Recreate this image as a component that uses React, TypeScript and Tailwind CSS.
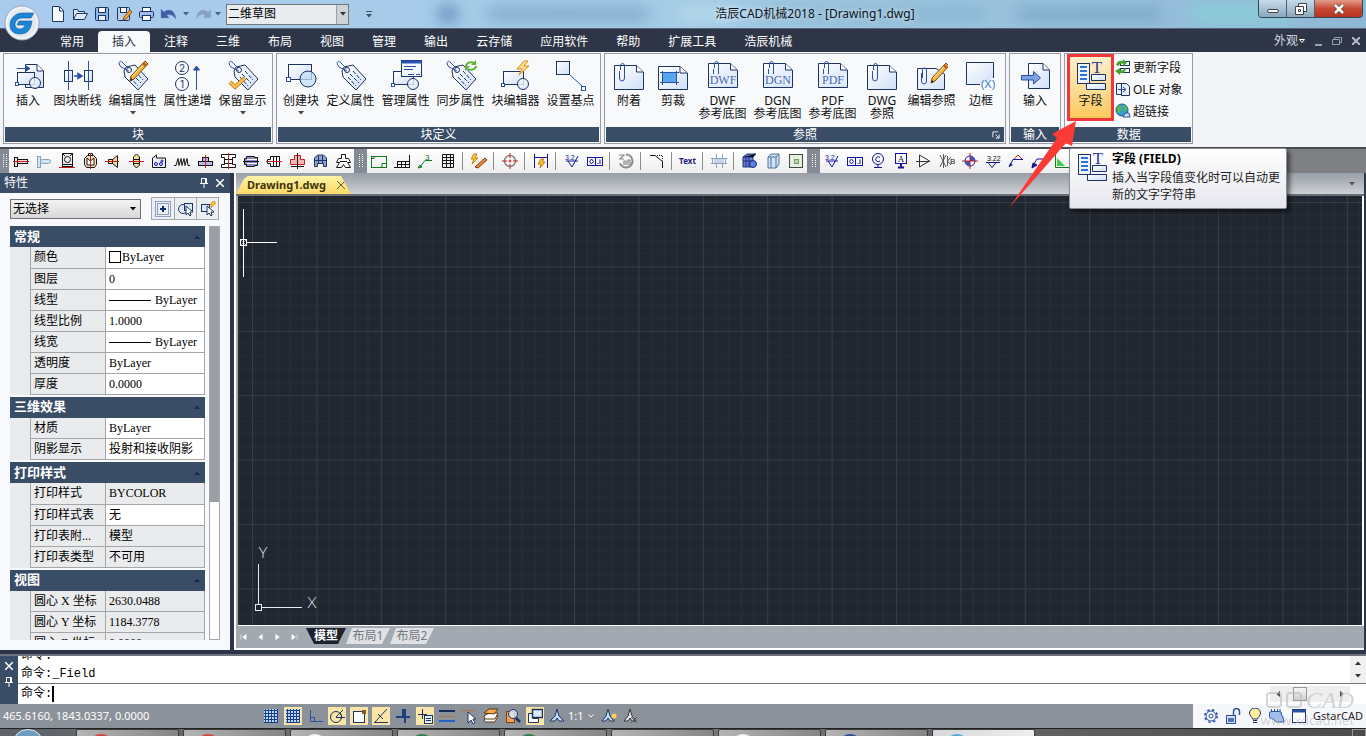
import React, { useState } from 'react';

const NAVY = '#1d3461';
const BLUE = '#2c4fa3';

const tagShape = (
  <g fill="none" stroke={NAVY}>
    <path d="M7 12L9 8L18 6L31 20L21 31L8 18Z" fill="url(#paper)" />
    <circle cx="12" cy="11" r="2.5" fill="#fff" />
    <path d="M12 12L4 8C1 5 2 1 5 3L11 9" stroke={BLUE} />
    <path d="M18 12l8 9M15 15l9 9M13 18l8 9" strokeDasharray="4 1.5" />
  </g>
);

const pencil = (
  <g>
    <path d="M28 2l3 3L17 20l-4 2l1-5z" fill="#f5b942" stroke="#7a4a12" />
    <path d="M27 3l3 3l-2 2l-3-3z" fill="#b5651d" />
    <path d="M15 17L26 6" stroke="#ffe39a" />
    <path d="M13 22l1-3l2 2z" fill="#222" />
  </g>
);

const clipPage = (
  <g fill="none" stroke={NAVY}>
    <path d="M1.500 8.500H23.500L30.500 15V32.500H1.500Z" fill="url(#paper)" transform="translate(0 -2)" />
    <path d="M23.500 6.500V13H30" fill="#fff" />
    <path d="M6.500 12V19a2.500 3 0 0 0 5 0V7a2 2.500 0 0 0-4 0V11" stroke={BLUE} />
  </g>
);

const namedPage = (text: string) => (
  <g>
    <g transform="translate(0 -2)">{clipPage}</g>
    <rect x="2" y="15" width="28" height="11" fill="#e4eefc" />
    <text x="16" y="25" textAnchor="middle" fontFamily="Liberation Serif" fontSize="12" fill="#4a6bb5">{text}</text>
  </g>
);

const blockShape = (
  <g stroke={NAVY} fill="url(#paper)">
    <rect x="3.500" y="12.500" width="20" height="13" />
    <circle cx="23" cy="25" r="5.500" fillOpacity=".8" />
    <rect x="1.500" y="24.500" width="3" height="3" fill="#fff" stroke={BLUE} />
  </g>
);

const fieldShape = (
  <g>
    <rect x="2.500" y="4.500" width="12" height="20" fill="#eef5ff" stroke={NAVY} />
    <path d="M5 8h7M5 12h7M5 16h7M5 20h7" stroke="#2f74d0" strokeWidth="2" />
    <text x="22" y="14" textAnchor="middle" fontFamily="Liberation Serif" fontSize="17" fill="#2a3da0">T</text>
    <path d="M16.500 21.500v-6h14v6z" fill="url(#paper)" stroke={NAVY} />
    <path d="M11.500 24.500h19v6h-19z" fill="url(#paper)" stroke={NAVY} />
  </g>
);

// ribbon drawings, 32 x 32
const bigIcons: Record<string, React.ReactNode> = {
  insert: (
    <g stroke={NAVY} fill="url(#paper)">
      <path d="M13.500 5.500H25L31.500 12V28.500H13.500Z" />
      <path d="M25 5.500V12H31" fill="#fff" />
      <rect x="5.500" y="13.500" width="17" height="12" />
      <circle cx="23" cy="24" r="5.500" fillOpacity=".8" />
      <rect x="3.500" y="23.500" width="3" height="3" fill="#fff" stroke={BLUE} />
      <path d="M5 9.500H16M14 7l4 2.500l-4 2.500z" fill={BLUE} stroke={BLUE} />
    </g>
  ),
  breakLine: (
    <g stroke={NAVY} fill="url(#paper)">
      <path d="M6.500 2V31M26.500 2V31" stroke={BLUE} />
      <rect x="2.500" y="11.500" width="8" height="11" />
      <rect x="22.500" y="11.500" width="8" height="11" />
      <path d="M6.500 11V23M26.500 11V23" stroke={BLUE} />
      <path d="M12 17H17M16 14.500l4 2.500l-4 2.500z" fill={BLUE} stroke={BLUE} strokeWidth="1.500" />
    </g>
  ),
  editAttr: <g>{tagShape}{pencil}</g>,
  attrUp: (
    <g fill="none" stroke={NAVY}>
      <circle cx="10" cy="9" r="6.500" />
      <circle cx="10" cy="25" r="6.500" />
      <text x="10" y="13" textAnchor="middle" fontFamily="Inter" fontSize="10" fill={NAVY} stroke="none">2</text>
      <text x="10" y="29" textAnchor="middle" fontFamily="Inter" fontSize="10" fill={NAVY} stroke="none">1</text>
      <path d="M24.500 31V9" stroke={BLUE} />
      <path d="M24.500 7l-3 4h6z" fill={BLUE} stroke={BLUE} />
    </g>
  ),
  keepAttr: <g>{tagShape}<path d="M3 23l5 5l10-9" fill="none" stroke="#b87414" strokeWidth="4" /><path d="M3 23l5 5l10-9" fill="none" stroke="#fbbd4e" strokeWidth="2.500" /></g>,
  createBlock: (
    <g stroke={NAVY} fill="url(#paper)">
      <rect x="3.500" y="5.500" width="23" height="15" />
      <circle cx="23" cy="20" r="8" fill="#c5dcf7" fillOpacity=".75" />
      <rect x="1.500" y="18.500" width="4" height="4" fill="#fff" stroke={BLUE} />
    </g>
  ),
  defineAttr: tagShape,
  manageAttr: (
    <g>
      {blockShape}
      <rect x="11.500" y="1.500" width="20" height="16" fill="#f4f9ff" stroke={NAVY} />
      <path d="M11 3h21" stroke="#2555b0" strokeWidth="3" />
      <path d="M14 7.500h12M14 10.500h9M18 15.500h6M26 15.500h4" stroke={BLUE} />
    </g>
  ),
  syncAttr: (
    <g>
      {tagShape}
      <g fill="none" stroke="#5bb531" strokeWidth="2">
        <path d="M21 7a5 4 0 0 1 8-3M31 7a5 4 0 0 1-8 3" />
        <path d="M31 1v5h-5zM20 12V7h5z" fill="#5bb531" stroke="none" />
      </g>
    </g>
  ),
  blockEditor: <g>{blockShape}<path d="M24 2L17 10h5l-3 6l10-9h-5l4-5z" fill="#ffdf8a" stroke="#d88916" /></g>,
  basePoint: (
    <g stroke={NAVY} fill="url(#paper)">
      <path d="M14 15L27 27" stroke={BLUE} />
      <rect x="1.500" y="2.500" width="13" height="13" />
      <rect x="26.500" y="27.500" width="4" height="4" fill="#fff" stroke={BLUE} />
    </g>
  ),
  attach: clipPage,
  clip: (
    <g stroke={NAVY} fill="url(#paper)">
      <path d="M1.500 7.500H23L30.500 14V30.500H1.500Z" />
      <path d="M23 7.500V14H30" fill="#fff" />
      <rect x="5.500" y="13.500" width="14" height="10" fill="#58a6ec" stroke={BLUE} />
      <path d="M5.500 12V26M19.500 12V26M3 13.500H22M3 23.500H22" stroke={BLUE} />
    </g>
  ),
  dwf: namedPage('DWF'),
  dgn: namedPage('DGN'),
  pdf: namedPage('PDF'),
  dwg: clipPage,
  editRef: (
    <g>
      <path d="M1.500 9.500H20L28.500 15V30.500H1.500Z" fill="url(#paper)" stroke={NAVY} />
      <path d="M5.500 14V22a2.500 3 0 0 0 5 0V11a2 2 0 0 0-4 0V19" fill="none" stroke={BLUE} />
      <g transform="translate(2 2)">{pencil}</g>
    </g>
  ),
  frame: (
    <g>
      <path d="M15 25.500H1.500V3.500H28.500V19" fill="url(#paper)" stroke={NAVY} />
      <text x="23" y="29" textAnchor="middle" fontFamily="Liberation Sans" fontSize="11" fill="#3277c8">(X)</text>
    </g>
  ),
  import: (
    <g>
      <path d="M9.500 4.500H24L30.500 11V29.500H9.500Z" fill="url(#paper)" stroke={NAVY} />
      <path d="M24 4.500V11H30" fill="#fff" stroke={NAVY} />
      <path d="M2.500 16.500h12v-4l7 6.500l-7 6v-4h-12z" fill="#7fa3e2" stroke={BLUE} />
    </g>
  ),
  field: fieldShape,
};

const red = '#c81e1e';
const ink = '#151515';
const dblue = '#1414a0';

const roughness = <g fill="none" stroke={dblue}><path d="M2 8h12M4 8l4 6l6-11" /><text x="1" y="7" fontSize="7" fontFamily="Liberation Sans" fill={dblue} stroke="none">3.2</text></g>;
const tolerance = <g fill="none" stroke={dblue}><rect x=".5" y="4.500" width="15" height="8" /><path d="M8.500 4v9M4.500 6l2 2.500l-2 2.500l-2-2.500zM13 6.500v4.500M10.500 10.500h1" /></g>;

// toolbar drawings, 16 x 16
const icons: Record<string, React.ReactNode> = {
  bolt: <g fill="#f7dada" stroke={ink}><rect x="1.500" y="4.500" width="3" height="9" /><rect x="4.500" y="6.500" width="10" height="4" /><path d="M0 8.500h16" stroke={red} /></g>,
  pin: <g fill="#cfe6f7" stroke="#8aa2b8"><rect x="1.500" y="3.500" width="3" height="11" /><rect x="4.500" y="6.500" width="10" height="4" rx="2" /></g>,
  bearing: <g fill="none" stroke={ink}><rect x="3.500" y=".5" width="10" height="13" fill="#eee" /><circle cx="8.500" cy="6.500" r="3" /><path d="M4 1l2 2M13 1l-2 2M4 11.500h9" /><path d="M0 14.500h16" stroke={red} /></g>,
  seal: <g fill="#f2e3b8" stroke={ink}><path d="M2.500 5.500l3-3h6l3 3v6l-2 3h-8l-2-3z" /><path d="M5 5l3.500 3l3.500-3v7H5z" fill="#fff" /><path d="M6.500 2V.5h4V2" /><path d="M8.500 0v16" stroke={red} /></g>,
  cone: <g fill="#f2d8a8" stroke={ink}><path d="M3.500 6.500h4l5-4v12l-5-4h-4z" /><path d="M7.500 6v5" /><path d="M0 8.500h14" stroke={red} /></g>,
  spindle: <g fill="#f2e08c" stroke={ink}><path d="M5.500 4l3-3l3 3v8l-3 3l-3-3z" /><path d="M1 8.500h15" stroke={red} /><path d="M5 6.500h7M5 10.500h7" /></g>,
  holePlate: <g fill="#e8ecfa" stroke={ink}><path d="M1.500 14.500V5l4-3v3h9v9.500z" /><g stroke={dblue} fill="none"><circle cx="5" cy="11" r="1.500" /><circle cx="10" cy="11" r="1.500" /><circle cx="11" cy="8" r="1" /></g></g>,
  spring: <path d="M0 12.500h2l2-7l1 7l2-7l1 7l2-7l1 7l2-7l1 7h2" fill="none" stroke={ink} />,
  gear1: <g fill="#b9b9e8" stroke={ink}><rect x="5.500" y="4.500" width="6" height="4" /><rect x="1.500" y="8.500" width="14" height="4" /><path d="M8.500 2v13" stroke={red} /></g>,
  beam: <g fill="#fff" stroke={ink}><path d="M1.500 1.500h14v3h-3v7h3v3h-14v-3h3v-7h-3z" /><path d="M5 6.500h7M5 10.500h7" /><path d="M8.500 0v16" stroke={red} /></g>,
  coupling: <g fill="#8c8ccf" stroke={ink}><path d="M3.500 3.500h8v1h3v8h-3v1h-8v-2h-2v-6h2z" /><path d="M4 6.500h10M4 10.500h10" stroke="#fff" /><path d="M0 8.500h16" /></g>,
  rotor: <g fill="#fff" stroke={ink}><path d="M1.500 6.500h3v-3h9v10h-9v-3h-3z" /><path d="M7.500 4v9M10.500 4v9" /><path d="M0 8.500h16" stroke={red} /></g>,
  pump: <g fill="#f4b6b6" stroke={red}><path d="M5.500 2.500h6v4h4v5h-14v-5h4z" /><path d="M8.500 0v16M2 13.500h13" stroke={ink} /></g>,
  rack: <g fill="#8ea3cf" stroke={NAVY}><path d="M2.500 13.500V5l3-3h6l3 3v8.500h-3v-3h-6v3zM2 7.500h13M6.500 3v7M10.500 3v7" /></g>,
  robot: <g fill="#fff" stroke={ink}><path d="M6.500 1.500h4v4h3l2 4h-3l3 5h-5l-2-3l-2 3h-5l3-5h-3l2-4h3z" /><path d="M5 8.500h7" /></g>,
  frameGreen: <g fill="none" stroke="#0e7a1c"><rect x=".5" y="3.500" width="15" height="11" /><path d="M3 3.500v2H1M15 10.500h-4v4" /></g>,
  bench: <path d="M15.500 2v13M3.500 8v7M3 8.500h13M3 11.500h13M7.500 8v7M11.500 8v7M0 14.500h16" stroke={ink} fill="none" />,
  leader: <g fill="none" stroke="#0e7a1c"><path d="M2 15l6-7.500h7" /><text x="8" y="7" fontSize="8" fontFamily="Liberation Sans" fill="#0e7a1c" stroke="none">3</text><path d="M1 15l4-1l-2-2z" /></g>,
  table: <path d="M2.500 1.500h11v13h-11zM2 4.500h12M2 7.500h12M2 10.500h12M6.500 1v14M10.500 1v14" stroke={ink} fill="#eee" />,
  torch: <g><path d="M3 1L0 6h3l-2 5l6-6H4l2-4z" fill="#ffcf4a" stroke="#c77d0b" /><path d="M14 5l2 2l-9 8l-3-1z" fill="#e98a3b" stroke="#8c3d10" /></g>,
  target: <g fill="none" stroke="#8a8a8a" strokeWidth="1.500"><circle cx="8" cy="8" r="5.500" /><path d="M8 0v5M8 11v5M0 8h5M11 8h5" stroke={red} strokeWidth="1" /><circle cx="8" cy="8" r="1" stroke={red} strokeWidth="1" /></g>,
  quickDim: <g fill="none" stroke={dblue}><path d="M1.500 1v14M14.500 1v14M2 4.500h12" /><path d="M8 6l-3 5h3l-1 4l5-6H9l2-3z" fill="#ffc837" stroke="#c77d0b" /></g>,
  roughness,
  tolerance,
  ring: <g fill="none" stroke="#8a8a8a" strokeWidth="2"><path d="M8 1.500a6.500 6.500 0 1 1-6 9" /><path d="M1 2h5L2 6h4M6 12V8h2v4M10 12V7h2v5" strokeWidth="1.200" /></g>,
  chamfer: <g fill="none" stroke={ink}><path d="M1 2.500h5l7.500 6v6.500" /><path d="M8 2.500h5.500v5" strokeDasharray="1 1" /></g>,
  grid: <g fill="none" stroke="#8aa0bb"><path d="M0 5.500h16M0 10.500h16M5.500 1v14M11.500 1v14" /><path d="M3 8h10" strokeWidth="4" stroke="#c6d3e4" /><path d="M1.500 5.500v5h13v-5z" /></g>,
  cube: <g stroke="#1c2f80"><path d="M1 4l4-3h9l-3 3v10H1z" fill="#6f7fd0" /><path d="M1 4h10l3-3M4 4v10M7 4v10M1 8h10" /><circle cx="11" cy="11" r="3.500" fill="#5d7fd9" /></g>,
  cube2: <g stroke="#50729e"><path d="M3 4l3-3h8v10l-3 4H3z" fill="#cfe3f5" /><path d="M3 4h8l3-3M11 4v11M6 4v11" fill="none" /></g>,
  viewport: <g stroke="#3d4d3d"><rect x="1.500" y="1.500" width="13" height="13" fill="#e6efe2" /><rect x="6.500" y="6.500" width="4" height="4" fill="#b9d2b4" stroke="#6f9c6a" /></g>,
  datum: <g fill="none" stroke={dblue}><circle cx="8" cy="6" r="5.500" /><path d="M10 4.500a2.500 2.500 0 1 0 0 3.500M8 12v3M4 14.500h8" /></g>,
  datumA: <g fill="none" stroke={dblue}><rect x="2.500" y=".5" width="11" height="10" /><text x="8" y="9" textAnchor="middle" fontSize="9" fontFamily="Liberation Serif" fill={ink} stroke="none">A</text><path d="M8 11v3M5 14.500h6" strokeWidth="2" /></g>,
  triangle: <g fill="none" stroke="#333"><path d="M3.500 2l10 6l-10 6zM0 8.500h14" /></g>,
  weld: <g fill="none" stroke="#555"><path d="M4.500 1v14M1 2l6 12M7 2L1 14M8.500 3v10M12 4L8.500 8l3.500 4" /><text x="11" y="11" fontSize="8" fontFamily="Liberation Sans" fill="#222" stroke="none">B</text></g>,
  center: <g><circle cx="8" cy="8" r="5" fill="#fff" stroke={dblue} /><path d="M8 3a5 5 0 0 1 5 5H8zM8 13a5 5 0 0 1-5-5h5z" fill="#3b57c8" /><path d="M8 0v16M0 8h16" stroke={red} /></g>,
  level: <g fill="none" stroke={dblue}><path d="M1 9.500h14M3 9.500l4 5l4-5" /><text x="2" y="8" fontSize="7" fontFamily="Liberation Sans" fill={ink} stroke="none">3.22</text></g>,
  arrowUp: <g fill="none"><path d="M1 14l4-7.500h10" stroke={dblue} /><path d="M1 14l4-2l-3-2z" fill={dblue} /><path d="M6 6l4-4l4 4" stroke={red} /></g>,
  arrowDown: <g fill="none" stroke={dblue}><path d="M1 14l5-8h9" /><path d="M1 15l5-3l-4-2z" fill={dblue} /></g>,
  angle: <g><path d="M1.500 1v13.500H15" stroke="#0e7a1c" fill="none" /><path d="M3 5l8 8H3z" fill="#3ecb4c" /></g>,
  // quick access
  newFile: <g fill="#f6f9ff" stroke={NAVY}><path d="M2.500.5h7l4 4v11h-11z" /><path d="M9.500 1v4h4" /></g>,
  open: <g fill="#dfeafa" stroke={NAVY}><path d="M1.500 13.500v-10h4l1 2h6v3" /><path d="M1.500 13.500l3-6h11l-3 6z" /></g>,
  save: <g fill="#8fb4e6" stroke={NAVY}><rect x="1.500" y="1.500" width="13" height="13" rx="1" /><rect x="4.500" y="1.500" width="7" height="5" fill="#fff" /><rect x="4.500" y="9.500" width="7" height="5" fill="#e8f0fb" /></g>,
  saveAs: <g fill="#b9cfee" stroke={NAVY}><rect x="1.500" y="1.500" width="12" height="13" rx="1" /><rect x="4.500" y="1.500" width="6" height="5" fill="#fff" /><path d="M14 4l2 2l-6 7l-3 1l1-3z" fill="#f5a93a" stroke="#8a5210" /></g>,
  print: <g fill="#9dbdea" stroke={NAVY}><rect x="4.500" y="1.500" width="8" height="5" fill="#fff" /><rect x="1.500" y="5.500" width="14" height="6" rx="1" /><rect x="4.500" y="9.500" width="8" height="5" fill="#fff" /></g>,
  undo: <path d="M1 3l3 3c5-4 11-2 12 7c-3-4-6-5-9-4l2 3H1z" fill="#3f5ca5" stroke="#6f89c0" strokeWidth=".5" />,
  redo: <path d="M15 3l-3 3c-5-4-11-2-12 7c3-4 6-5 9-4l-2 3h8z" fill="#86a0c9" stroke="#a5b8d4" strokeWidth=".5" />,
  // data panel
  refresh: <g><rect x="5.500" y="2.500" width="9" height="4" fill="#fff" stroke={NAVY} /><rect x="5.500" y="9.500" width="9" height="4" fill="#fff" stroke={NAVY} /><path d="M1 6c1-4 4-5 7-4V0l4 4l-4 3V5C6 4 4 5 4 7zM11 10c-1 4-4 5-6 4v2l-5-4l5-3v2c3 1 4 0 5-2z" fill="#43a52c" /></g>,
  ole: <g fill="#e8f1fd" stroke={NAVY}><path d="M1.500 2.500h8v11h-8z" /><path d="M6.500 2.500h5l3 3v9h-8z" /><path d="M3 8.500h7M8 6l3 2.500L8 11" fill="none" stroke={BLUE} /></g>,
  link: <g><circle cx="7" cy="7" r="6" fill="#3aa0c4" stroke="#1c5a87" /><path d="M3 3c3-1 4 1 3 3s1 3-2 4c-2-1-3-4-1-7zM9 2c3 1 4 4 3 6L9 6z" fill="#57b947" /><path d="M8 14l2-4h4l1 4z" fill="#cfdcf2" stroke={BLUE} /></g>,
  // palette buttons
  selAdd: <g stroke={BLUE} fill="none"><rect x=".5" y=".5" width="15" height="15" strokeDasharray="1 1" /><rect x="2.500" y="2.500" width="11" height="11" strokeDasharray="1 1" /><path d="M5 8h6M8 5v6" stroke="#102a70" strokeWidth="2" /></g>,
  selPick: <g stroke={NAVY} fill="#dbe8fa"><circle cx="5" cy="8" r="4.500" /><rect x="6.500" y="2.500" width="8" height="7" /><path d="M8 5v9l2-2l2 3l1-1l-1-3h3z" fill="#fff" /></g>,
  selQuick: <g stroke={NAVY} fill="#dbe8fa"><rect x="1.500" y="3.500" width="8" height="7" /><path d="M7 5v9l2-2l2 3l1-1l-1-3h3z" fill="#fff" /><path d="M13 0l-3 4h2l-1 3l5-5h-2l1-2z" fill="#ffc13b" stroke="#d68a15" strokeWidth=".7" /></g>,
  // status bar
  snap: <g stroke="#1a3d8f"><path d="M1 1h14v14H1z" fill="#b8daf7" stroke="none" /><path d="M2.500 1v14M5.500 1v14M8.500 1v14M11.500 1v14M14.500 1v14M1 2.500h14M1 5.500h14M1 8.500h14M1 11.500h14M1 14.500h14" /></g>,
  ortho: <g fill="none" stroke={BLUE}><path d="M3.500 2v11.500H16M3.500 9.500h4v4" /></g>,
  polar: <g fill="none" stroke={NAVY}><circle cx="7" cy="9" r="5.500" /><path d="M7 9.500h9M7 9l7-7M11 5a5 5 0 0 1 1 6" /></g>,
  osnap: <g><rect x="2.500" y="3.500" width="11" height="11" fill="#f8fbff" stroke={NAVY} /><rect x="11" y="2" width="4" height="4" fill="#8b5a1c" /></g>,
  otrack: <g fill="none" stroke={NAVY}><path d="M1 14.500h14M2 14L14 1M5 6l5 5" /></g>,
  dynUcs: <path d="M1 9h7V2h2v13M8 9h7" stroke="#1b3f80" strokeWidth="2" fill="none" />,
  dynInput: <g fill="#e8f3ff" stroke={NAVY}><path d="M1 6.500h9M5.500 1v10" /><rect x="7.500" y="7.500" width="8" height="8" /><path d="M9 10.500h5M9 12.500h5" /></g>,
  lweight: <g><path d="M0 3h16" stroke="#14295a" strokeWidth="2" /><path d="M0 8.500h16" stroke="#c06a2a" strokeDasharray="3 1" /><path d="M0 13h16" stroke="#2464c4" strokeWidth="2" /></g>,
  cursor: <g><path d="M0 2.500h16" stroke="#c06a2a" strokeDasharray="3 1" /><path d="M7 4v11l3-3l2 4l2-1l-2-4h3z" fill="#fff" stroke={NAVY} /></g>,
  layers: <g stroke="#5a3a10"><path d="M1 12l4-4h10l-3 6H2z" fill="#fff" /><path d="M1 8l5-3h9l-3 6H2z" fill="#fff" /><path d="M1 5l5-4h9l-4 5z" fill="#ffa94d" /></g>,
  zoomSel: <g><rect x="1.500" y="3.500" width="8" height="11" fill="#f0a24f" stroke="#8a3f10" /><circle cx="8" cy="6" r="4.500" fill="#d8ecff" fillOpacity=".8" stroke={NAVY} /><path d="M11 10l4 4" stroke={NAVY} strokeWidth="2.500" /></g>,
  model: <g fill="#d9ebff" stroke={NAVY}><path d="M1.500 5.500h4v5h6v4h-10z" fill="#fff" /><rect x="5.500" y="1.500" width="10" height="8" strokeWidth="1.500" /></g>,
  anno: <path d="M8 1l2 7l5 5h-5l-2-3l-2 3H1l5-5z" fill="#bcdcff" stroke={NAVY} />,
  annoLamp: <g><path d="M7 1l2 7l4 5H9l-2-3l-2 3H1l4-5z" fill="#bcdcff" stroke={NAVY} /><circle cx="13" cy="8" r="2.500" fill="#ffd257" /><path d="M13 11v3" stroke="#7c5a10" /></g>,
  annoOff: <g><path d="M7 1l2 7l4 5H9l-2-3l-2 3H1l4-5z" fill="#e9e9e9" stroke="#333" /><path d="M8 9l6 6M14 9l-6 6" stroke="#555" /></g>,
  gear: <g fill="none" stroke={BLUE}><circle cx="8" cy="8" r="5" strokeWidth="1" fill="#f3f7ff" /><circle cx="8" cy="8" r="6.200" strokeDasharray="2.500 2.400" strokeWidth="1.500" /><circle cx="8" cy="8" r="2" /></g>,
  unlock: <g fill="none" stroke={BLUE}><rect x="1.500" y="7.500" width="9" height="8" fill="#cfe0fa" /><path d="M8.500 7V3.500a3 3 0 0 1 6 0V7M4 10v4M6 10v4M8 10v4" strokeWidth="1.500" /></g>,
  bulb: <g><path d="M5.500 11c0-2-3-3-3-6a5.500 5 0 0 1 11 0c0 3-3 4-3 6z" fill="#fff0a0" stroke={NAVY} /><path d="M6 12.500h4M6 14.500h4" stroke={NAVY} /></g>,
  hardware: <g fill="#9fc0ee" stroke={BLUE}><rect x=".5" y="3.500" width="12" height="7" rx="2" /><path d="M2.500 1v3M5.500 1v3M8.500 1v3M11 1v3M3 10l4 4h8l-1-5l-2-3" /></g>,
  fullscreen: <g><rect x="1.500" y="1.500" width="13" height="13" fill="#fff" stroke={NAVY} /><path d="M1 3h14" stroke={BLUE} strokeWidth="3" /></g>,
  thumbtack: <path d="M5.500 3.500h5v5h-5zM9.500 3v6M4 8.500h8M8 9v4" fill="none" stroke="#fff" />,
};

const Icon: React.FC<{ name: string }> = ({ name }) => (
  <svg viewBox="0 0 16 16" className="h-4 w-4 shrink-0" aria-hidden="true">{icons[name]}</svg>
);

const BigIcon: React.FC<{ name: string }> = ({ name }) => (
  <svg viewBox="0 0 32 32" className="h-8 w-8 shrink-0" aria-hidden="true">{bigIcons[name]}</svg>
);

const Caret: React.FC<{ className?: string }> = ({ className = '' }) => (
  <svg viewBox="0 0 8 4" className={`h-1 w-2 shrink-0 ${className}`} fill="currentColor" aria-hidden="true">
    <path d="M1 0h6L4 3.500z" />
  </svg>
);

const menus = ['常用', '插入', '注释', '三维', '布局', '视图', '管理', '输出', '云存储', '应用软件', '帮助', '扩展工具', '浩辰机械'];

interface Tool {
  icon: string;
  lines: string[];
  wide?: boolean;
  menu?: boolean;
}

const blockTools: Tool[] = [
  { icon: 'insert', lines: ['插入'] },
  { icon: 'breakLine', lines: ['图块断线'], wide: true },
  { icon: 'editAttr', lines: ['编辑属性'], wide: true, menu: true },
  { icon: 'attrUp', lines: ['属性递增'], wide: true },
  { icon: 'keepAttr', lines: ['保留显示'], wide: true, menu: true },
];

const defTools: Tool[] = [
  { icon: 'createBlock', lines: ['创建块'], menu: true },
  { icon: 'defineAttr', lines: ['定义属性'], wide: true },
  { icon: 'manageAttr', lines: ['管理属性'], wide: true },
  { icon: 'syncAttr', lines: ['同步属性'], wide: true },
  { icon: 'blockEditor', lines: ['块编辑器'], wide: true },
  { icon: 'basePoint', lines: ['设置基点'], wide: true },
];

const refTools: Tool[] = [
  { icon: 'attach', lines: ['附着'] },
  { icon: 'clip', lines: ['剪裁'] },
  { icon: 'dwf', lines: ['DWF', '参考底图'], wide: true },
  { icon: 'dgn', lines: ['DGN', '参考底图'], wide: true },
  { icon: 'pdf', lines: ['PDF', '参考底图'], wide: true },
  { icon: 'dwg', lines: ['DWG', '参照'] },
  { icon: 'editRef', lines: ['编辑参照'], wide: true },
  { icon: 'frame', lines: ['边框'] },
];

const ToolButton: React.FC<{ tool: Tool }> = ({ tool }) => (
  <button className={`flex flex-col items-center pt-1 whitespace-nowrap leading-[13px] ${tool.wide ? 'w-[55px]' : 'w-11'}`}>
    <BigIcon name={tool.icon} />
    <span className="mt-[3px]">
      {tool.lines.map((line) => (
        <span key={line} className="block">{line}</span>
      ))}
    </span>
    {tool.menu && <Caret className="mt-1 text-[#444]" />}
  </button>
);

interface PanelProps {
  title: string;
  children: React.ReactNode;
  launcher?: boolean;
}

const Panel: React.FC<PanelProps> = ({ title, children, launcher }) => (
  <section className="flex h-[91px] flex-col border border-[#9a9ba5] bg-[#f8f9fb] p-px">
    <div className="flex flex-1 px-px">{children}</div>
    <h2 className="relative h-[15px] shrink-0 bg-[#3a4d66] text-center leading-[15px] text-white">
      {title}
      {launcher && (
        <button aria-label="参照设置" className="absolute top-1 right-1">
          <svg viewBox="0 0 9 9" className="h-2 w-2" fill="none" stroke="#fff"><path d="M1 7V1h6M4 4l4 4M8 4v4H4" /></svg>
        </button>
      )}
    </h2>
  </section>
);

const TitleBar = () => (
  <header className="relative flex h-7 items-center overflow-hidden bg-linear-to-r from-[#a9cbee] via-[#a5cce6] to-[#8fb8d6] pl-12">
    <div className="absolute inset-0 flex items-center gap-8 pl-[440px] blur-sm" aria-hidden="true">
      <span className="h-3 w-4 bg-[#4472a8]" />
      <span className="h-3 w-40 bg-[#7ba5c9]" />
      <span className="h-2 w-12 bg-[#c2e4ee]" />
      <span className="h-3 w-56 bg-[#84b3cf]" />
      <span className="h-2 w-36 bg-[#6b9ab9]" />
      <span className="h-4 w-24 bg-[#8ad0d8]" />
    </div>
    <nav className="relative flex items-center gap-[6px] pl-0.5">
      {['newFile', 'open', 'save', 'saveAs', 'print', 'undo'].map((name) => (
        <button key={name} aria-label={name}><Icon name={name} /></button>
      ))}
      <Caret className="text-[#49617f]" />
      <button aria-label="redo"><Icon name="redo" /></button>
      <Caret className="-ml-1 text-[#49617f]" />
    </nav>
    <div className="relative ml-1 flex h-[21px] w-[123px] items-center border border-[#6f7780] bg-[#e9ecef]">
      <select aria-label="工作空间" className="h-full w-full appearance-none bg-transparent pl-px outline-none">
        <option>二维草图</option>
      </select>
      <span className="pointer-events-none absolute inset-y-0 right-0 flex w-3 items-center justify-center border-l border-[#9aa0a6] bg-[#cfd3d7]">
        <Caret className="text-[#333]" />
      </span>
    </div>
    <span className="relative ml-4 flex flex-col items-center gap-0.5 text-[#3f5368]"><i className="h-px w-1.5 bg-current" /><Caret /></span>
    <h1 className="absolute inset-x-0 text-center text-[#0c1420] [text-shadow:0_0_6px_#fff]">
      <span className="pl-[264px]">浩辰CAD机械2018 - [Drawing1.dwg]</span>
    </h1>
    <div className="absolute top-0 right-[3px] flex h-[18px] overflow-hidden rounded-b border border-t-0 border-[#33475a]">
      <button aria-label="最小化" className="flex w-7 items-center justify-center border-r border-[#4b6075] bg-linear-to-b from-[#c7dceb] to-[#8aa7bd]">
        <i className="mt-1 h-1 w-3 rounded-xs border border-[#444] bg-white" />
      </button>
      <button aria-label="还原" className="flex w-7 items-center justify-center border-r border-[#4b6075] bg-linear-to-b from-[#c7dceb] to-[#8aa7bd]">
        <svg viewBox="0 0 12 12" className="h-3 w-3" fill="#fff" stroke="#444"><path d="M3.500.5h8v8h-8z" /><path d="M.5 3.500h8v8h-8z" /><path d="M3.500 6.500h2v2h-2z" /></svg>
      </button>
      <button aria-label="关闭" className="flex w-[47px] items-center justify-center bg-linear-to-b from-[#e39a8b] via-[#c64934] to-[#b8321c]">
        <svg viewBox="0 0 12 10" className="h-2.5 w-3"><path d="M2 1l8 8M10 1l-8 8" stroke="#543" strokeWidth="4" /><path d="M2 1l8 8M10 1l-8 8" stroke="#fff" strokeWidth="2.500" /></svg>
      </button>
    </div>
  </header>
);

const MenuBar = () => {
  const [active, setActive] = useState('插入');

  return (
    <div className="relative flex h-6 items-end border-t border-[#56617a] bg-[#2e3547] pl-[46px] text-white">
      <button aria-label="GstarCAD" className="absolute -top-6 left-1 z-10">
        <svg viewBox="0 0 36 36" className="h-9 w-9">
          <circle cx="18" cy="18" r="17" fill="#f1f4f8" stroke="#9aa7b8" />
          <circle cx="18" cy="18" r="14.500" fill="#e4e9f0" />
          <path d="M30 8H18C11 8 6 14 6 20c0 6 4 9 10 9c7 0 11-4 12-13H15l-2 4h8c-1 3-3 4-5 4c-3 0-5-2-5-4c0-4 3-7 7-7h9z" fill="#1d84d6" stroke="#1360a8" strokeWidth=".6" />
        </svg>
      </button>
      {menus.map((menu) => (
        <button
          key={menu}
          onClick={() => setActive(menu)}
          className={`h-[21px] rounded-t-sm px-3.5 whitespace-nowrap ${
            active === menu ? 'bg-[#f8f9fb] text-[#2e3547]' : 'text-white'
          }`}
        >
          {menu}
        </button>
      ))}
      <div className="ml-auto flex h-full items-center gap-2.5 pr-1.5 text-[#d5d9e2]">
        <button className="flex items-center gap-px">
          外观
          <svg viewBox="0 0 6 6" className="h-1.5 w-1.5" fill="none" stroke="#fff"><path d="M.5 1.500h5L3 4.500z" /></svg>
        </button>
        <button aria-label="最小化图形" className="mt-2 h-0.5 w-[7px] bg-[#99a0af]" />
        <button aria-label="还原图形">
          <svg viewBox="0 0 10 8" className="h-2 w-2.5" fill="none" stroke="#99a0af"><path d="M2.500 2V.5h7v5H8M.5 2.500h7v5h-7z" /></svg>
        </button>
        <button aria-label="关闭图形">
          <svg viewBox="0 0 8 8" className="h-2 w-2" stroke="#b5bac6" strokeWidth="2"><path d="M0 0l8 8M8 0L0 8" /></svg>
        </button>
      </div>
    </div>
  );
};

const FieldTooltip = () => (
  <>
    <svg viewBox="0 0 70 90" className="pointer-events-none absolute top-[67px] -left-[58px] z-20 h-[90px] w-[70px]" aria-hidden="true">
      <path d="M0 87L48 17L43 13L67 0L63 25L57 22Z" fill="#fb3a35" />
    </svg>
    <div role="tooltip" className="absolute top-[94px] left-0.5 z-30 flex w-[218px] gap-1 rounded-xs border border-[#8b8d94] bg-linear-to-b from-white to-[#e6e7ee] py-px pr-1 pl-1.5 leading-[17px] text-[#222] shadow-[3px_3px_4px_rgba(0,0,0,0.5)]">
      <BigIcon name="field" />
      <div className="pb-1">
        <strong className="block text-black">字段 (FIELD)</strong>
        <p className="pt-0.5">插入当字段值变化时可以自动更新的文字字符串</p>
      </div>
    </div>
  </>
);

const Ribbon = () => (
  <div className="flex h-[97px] shrink-0 gap-[3px] border-b-2 border-[#4a4c55] bg-[#f4f5f8] pt-px pl-[3px] leading-[13px] text-[#111]">
    <Panel title="块">
      {blockTools.map((tool) => <ToolButton key={tool.icon} tool={tool} />)}
    </Panel>
    <Panel title="块定义">
      {defTools.map((tool) => <ToolButton key={tool.icon} tool={tool} />)}
    </Panel>
    <Panel title="参照" launcher>
      {refTools.map((tool) => <ToolButton key={tool.icon} tool={tool} />)}
    </Panel>
    <Panel title="输入">
      <div className="px-px"><ToolButton tool={{ icon: 'import', lines: ['输入'] }} /></div>
    </Panel>
    <Panel title="数据">
      <div className="relative -mt-px h-[67px]">
        <button className="flex h-full w-[47px] flex-col items-center border-[3px] border-[#f0383c] bg-linear-to-b from-[#fdf0cc] via-[#fbdd98] to-[#fdc95a] pt-0.5">
          <BigIcon name="field" />
          <span className="mt-[3px]">字段</span>
        </button>
        <FieldTooltip />
      </div>
      <ul className="flex flex-col gap-1.5 py-1 pr-2 pl-px">
        {[['refresh', '更新字段'], ['ole', 'OLE 对象'], ['link', '超链接']].map(([icon, label]) => (
          <li key={icon}>
            <button className="flex items-center gap-0.5 whitespace-nowrap"><Icon name={icon} />{label}</button>
          </li>
        ))}
      </ul>
    </Panel>
  </div>
);

const toolRows: string[] = [
  'grip', 'bolt', 'pin', 'bearing', 'seal', 'cone', 'spindle', 'holePlate', 'spring', 'gear1', 'beam', 'coupling', 'rotor', 'pump', 'rack', 'robot',
  'grip', 'frameGreen', 'bench', 'leader', 'table', '|', 'torch', '|', 'target', '|', 'quickDim', '|', 'roughness', 'tolerance', '|', 'ring', '|',
  'chamfer', '|', 'Text', '|', 'grid', '|', 'cube', 'cube2', 'viewport',
  'grip', 'roughness', 'tolerance', 'datum', 'datumA', 'triangle', 'weld', 'center', 'level', 'arrowUp', 'arrowDown', 'angle',
];

const Toolbar = () => (
  <div className="flex h-6 shrink-0 bg-[#7f8083]">
    <div className="flex items-center bg-linear-to-b from-white to-[#eeeeee]">
      {toolRows.map((name, i) => {
        if (name === 'grip') {
          return (
            <span key={i} className={`flex h-full items-center justify-center bg-[#858b95] ${i === 0 ? 'w-[9px]' : 'w-[13px]'}`}>
              <svg viewBox="0 0 4 14" className="h-3.5 w-1" stroke="#fff" strokeDasharray="1 1"><path d="M.5 0v14M3.500 0v14" /></svg>
            </span>
          );
        }
        if (name === '|') {
          return <span key={i} className="mr-1 ml-[3px] h-[18px] w-px bg-[#8c8c8c]" />;
        }
        return (
          <button key={i} aria-label={name} className="flex w-[23px] justify-center">
            {name === 'Text' ? <b className="text-[8px] text-[#1a1a80]">Text</b> : <Icon name={name} />}
          </button>
        );
      })}
    </div>
  </div>
);

interface Prop {
  label: string;
  value: string;
  mark?: 'box' | 'line';
  locked?: boolean;
}

const groups: { title: string; rows: Prop[] }[] = [
  {
    title: '常规',
    rows: [
      { label: '颜色', value: 'ByLayer', mark: 'box' },
      { label: '图层', value: '0' },
      { label: '线型', value: 'ByLayer', mark: 'line' },
      { label: '线型比例', value: '1.0000' },
      { label: '线宽', value: 'ByLayer', mark: 'line' },
      { label: '透明度', value: 'ByLayer' },
      { label: '厚度', value: '0.0000' },
    ],
  },
  {
    title: '三维效果',
    rows: [
      { label: '材质', value: 'ByLayer' },
      { label: '阴影显示', value: '投射和接收阴影' },
    ],
  },
  {
    title: '打印样式',
    rows: [
      { label: '打印样式', value: 'BYCOLOR', locked: true },
      { label: '打印样式表', value: '无' },
      { label: '打印表附...', value: '模型', locked: true },
      { label: '打印表类型', value: '不可用', locked: true },
    ],
  },
  {
    title: '视图',
    rows: [
      { label: '圆心 X 坐标', value: '2630.0488', locked: true },
      { label: '圆心 Y 坐标', value: '1184.3778', locked: true },
      { label: '圆心 Z 坐标', value: '0.0000', locked: true },
    ],
  },
];

const Properties = () => (
  <aside className="flex w-[230px] shrink-0 flex-col bg-[#f8f9fc]">
    <div className="flex h-5 shrink-0 items-center bg-[#3a4d66] pl-1 text-white">
      特性
      <button aria-label="自动隐藏" className="mr-1 ml-auto"><Icon name="thumbtack" /></button>
      <button aria-label="关闭" className="mr-1.5">
        <svg viewBox="0 0 8 8" className="h-2 w-2" stroke="#fff" strokeWidth="1.500"><path d="M0 0l8 8M8 0L0 8" /></svg>
      </button>
    </div>
    <div className="flex shrink-0 items-center px-2.5 pt-1 pb-1.5">
      <div className="relative w-[131px]">
        <select aria-label="选择对象" className="h-5 w-full appearance-none border border-[#707070] bg-linear-to-b from-[#f2f2f2] to-[#d8d8d8] pl-0.5 leading-4 outline-none">
          <option>无选择</option>
        </select>
        <Caret className="pointer-events-none absolute top-2 right-1 text-black" />
      </div>
      <div className="ml-2.5 flex border border-[#a5a7ab] bg-[#eceef2]">
        {['selAdd', 'selPick', 'selQuick'].map((name, i) => (
          <button key={name} aria-label={name} className={`flex h-[21px] w-[22px] items-center justify-center ${i > 0 ? 'border-l border-[#a5a7ab]' : ''}`}>
            <Icon name={name} />
          </button>
        ))}
      </div>
    </div>
    <div className="mb-2.5 flex min-h-0 flex-1 overflow-hidden px-2.5">
      <div className="flex min-w-0 flex-1 flex-col gap-0.5 font-['Liberation_Serif','Noto_Sans_CJK_SC',serif] leading-4 text-black">
        {groups.map((group) => (
          <section key={group.title}>
            <h3 className="flex h-[21px] items-center bg-[#3a4d66] px-1 text-[13px] font-bold text-white">
              {group.title}
              <Caret className="ml-auto rotate-180 text-[#1b2c4b]" />
            </h3>
            <div className="bg-[#eaebed] pl-5">
              <table className="w-full table-fixed border-collapse">
                <tbody>
                  {group.rows.map((row) => (
                    <tr key={row.label} className="h-[21px]">
                      <th className="w-[75px] border border-t-0 border-[#a3a5a8] bg-[#eaebed] p-0 pl-[3px] text-left font-normal whitespace-nowrap">{row.label}</th>
                      <td className={`border border-t-0 border-[#a3a5a8] p-0 pl-[3px] whitespace-nowrap ${row.locked ? 'bg-[#eaebed]' : 'bg-white'}`}>
                        {row.mark === 'box' && <i className="mr-px inline-block h-3 w-3 border border-black align-[-2px]" />}
                        {row.mark === 'line' && <i className="mr-1 inline-block h-px w-[42px] bg-black align-middle" />}
                        {row.value}
                      </td>
                    </tr>
                  ))}
                </tbody>
              </table>
            </div>
          </section>
        ))}
      </div>
      <div className="ml-1 flex w-[11px] shrink-0 flex-col border border-[#a5a9af] bg-white">
        <div className="h-2/3 bg-[#9a9fa6]" />
      </div>
    </div>
  </aside>
);

const Drawing = () => (
  <div className="relative min-h-0 flex-1 overflow-hidden border-r-2 border-b border-white bg-[#212730]">
    <svg className="absolute inset-0 h-full w-full" aria-label="Drawing1.dwg">
      <defs>
        <pattern id="grid" width="64.400" height="64.400" patternUnits="userSpaceOnUse" x="14" y="6">
          <path d="M12.900 0v64.400M25.800 0v64.400M38.600 0v64.400M51.500 0v64.400M0 12.900h64.400M0 25.800h64.400M0 38.600h64.400M0 51.500h64.400" stroke="#272e38" />
          <path d="M.5 0v64.400M0 .5h64.400" stroke="#363d48" />
        </pattern>
      </defs>
      <rect width="100%" height="100%" fill="url(#grid)" />
      <g fill="none" stroke="#fff">
        <path d="M5.500 13v68M9 46.500h30" />
        <rect x="2.500" y="43.500" width="6" height="6" />
        <path d="M3 44l5 5M8 44l-5 5" strokeWidth=".5" />
      </g>
    </svg>
    <svg viewBox="0 0 90 90" className="absolute bottom-0 left-0 h-[90px] w-[90px]" fill="none" stroke="#e8eaee" aria-hidden="true">
      <path d="M20.500 29v40M24 72.500h40" />
      <rect x="17.500" y="69.500" width="6" height="6" />
      <g fill="#e8eaee" stroke="none" fontSize="15" fontFamily="Lato" fontWeight="300" textAnchor="middle">
        <text x="25" y="23">Y</text>
        <text x="74" y="73">X</text>
      </g>
    </svg>
  </div>
);

const Workspace = () => (
  <main className="mx-1 mr-0.5 flex min-w-0 flex-1 flex-col border-b-2 border-l-2 border-white bg-[#a3a9b1]">
    <div className="flex h-[23px] shrink-0 items-end border-b-2 border-[#6a6e76] bg-linear-to-b from-[#989ea7] to-[#cdd0d5]">
      <div className="flex h-[18px] w-[115px] items-center bg-linear-to-b from-[#fff3a6] to-[#fbd965] pl-[11px] text-[11px] font-bold text-[#3d3410] [clip-path:polygon(0_100%,8px_15%,12px_0,calc(100%-10px)_0,100%_100%)]">
        Drawing1.dwg
        <button aria-label="关闭 Drawing1" className="mr-1.5 ml-auto">
          <svg viewBox="0 0 8 8" className="h-2 w-2" stroke="#6d5c1c"><path d="M0 0l8 8M8 0L0 8" /></svg>
        </button>
      </div>
      <button aria-label="文件列表" className="mr-2 mb-2 ml-auto text-[#555]"><Caret /></button>
    </div>
    <div className="flex min-h-0 flex-1 flex-col pl-0.5">
      <Drawing />
    </div>
    <div className="flex h-[22px] shrink-0 items-center">
      <div className="flex w-[70px] items-center gap-2.5 pl-1">
        {['M1 1v6M7 1L3 4l4 3z', 'M6 1L2 4l4 3z', 'M2 1l4 3l-4 3z', 'M7 1v6M1 1l4 3l-4 3z'].map((d) => (
          <button key={d} aria-label="切换布局"><svg viewBox="0 0 8 8" className="h-2 w-[7px]" fill="#fff" stroke="#fff" strokeWidth=".6"><path d={d} /></svg></button>
        ))}
      </div>
      <button className="mt-0.5 h-4 w-10 self-start bg-[#1d222c] leading-4 font-semibold text-white [clip-path:polygon(0_0,100%_0,calc(100%-8px)_100%,8px_100%)]">模型</button>
      {['布局1', '布局2'].map((name) => (
        <button key={name} className="mt-0.5 h-4 w-11 self-start bg-[#dfe1e4] leading-4 text-[#73777d] [clip-path:polygon(6px_0,100%_0,calc(100%-8px)_100%,0_100%)]">{name}</button>
      ))}
    </div>
  </main>
);

const CommandLine = () => (
  <section className="mt-1 flex h-[50px] shrink-0 border-t-2 border-[#6e727d] bg-white font-['Liberation_Mono','Noto_Sans_CJK_SC',monospace] text-black">
    <div className="flex w-[18px] shrink-0 flex-col items-center gap-1 bg-[#3a4d66] pt-1.5">
      <button aria-label="关闭命令行"><svg viewBox="0 0 8 8" className="h-2 w-2" stroke="#fff" strokeWidth="1.500"><path d="M0 0l8 8M8 0L0 8" /></svg></button>
      <button aria-label="固定命令行"><Icon name="thumbtack" /></button>
    </div>
    <div className="flex min-w-0 flex-1 flex-col">
      <div className="flex h-7 border-b border-[#777]">
        <div className="flex flex-1 flex-col justify-end overflow-hidden pl-[3px] leading-[18px]">
          <p>命令:</p>
          <p>命令:_Field</p>
        </div>
        <div className="flex w-4 flex-col items-center justify-around bg-[#f0f0f0] text-[#333]">
          <Caret className="rotate-180" />
          <Caret />
        </div>
      </div>
      <div className="flex flex-1 items-center pl-[3px]">
        <label htmlFor="command">命令:</label>
        <span className="h-4 w-0.5 bg-black" />
        <input id="command" className="min-w-0 flex-1 outline-none" />
        <div className="mr-4 flex h-4 w-20 items-center justify-between bg-[#eeeeee] px-1 text-[#333]">
          <Caret className="rotate-90" />
          <i className="mr-5 h-3.5 w-3.5 border border-[#999] bg-linear-to-b from-[#f5f5f5] to-[#cfcfcf]" />
          <Caret className="-rotate-90" />
        </div>
      </div>
    </div>
  </section>
);

const statusTools: [string, boolean][] = [
  ['snap', false], ['snap', true], ['ortho', false], ['polar', true], ['osnap', true], ['otrack', true], ['dynUcs', false],
  ['dynInput', true], ['lweight', false], ['cursor', false], ['layers', false], ['zoomSel', false], ['model', true], ['anno', false],
];

const StatusBar = () => (
  <footer className="flex h-6 shrink-0 items-center bg-[#8c9299] text-[11px] text-white">
    <span className="w-[260px] pl-[3px]">465.6160, 1843.0337, 0.0000</span>
    {statusTools.map(([name, on], i) => (
      <button key={i} aria-label={name} className="flex w-[22px] justify-center">
        <span className={`p-px ${on ? 'bg-[#fbe6a8]' : ''}`}><Icon name={name} /></span>
      </button>
    ))}
    <button className="mr-1 flex items-center gap-1">1:1<svg viewBox="0 0 6 4" className="h-1 w-1.5" fill="none" stroke="#fff"><path d="M.5.5L3 3L5.500.5" /></svg></button>
    {['annoLamp', 'annoOff'].map((name) => (
      <button key={name} aria-label={name} className="flex w-[22px] justify-center"><Icon name={name} /></button>
    ))}
    <div className="relative ml-auto flex h-full items-center gap-1.5 bg-[#f6f7fa] pr-[3px] pl-2.5 text-[#222]">
      {['gear', 'unlock', 'bulb', 'hardware', 'fullscreen'].map((name) => (
        <button key={name} aria-label={name}><Icon name={name} /></button>
      ))}
      <span>GstarCAD</span>
      <div className="pointer-events-none absolute -top-4 right-3 flex flex-col items-end text-[#b9bbbf] opacity-60" aria-hidden="true">
        <span className="flex items-center gap-1 font-['Liberation_Serif'] text-2xl leading-6 italic">
          <i className="h-4 w-4 rounded-sm border-2 border-current" />
          <i className="h-4 w-4 rounded-sm border-2 border-current" />
          CAD
        </span>
        <span className="text-[13px] leading-4">www.xdcad.net</span>
      </div>
    </div>
  </footer>
);

const taskColors = ['#d8453a', '#d8453a', '#f3f3f3', '#2f7d4a', '#2f7d4a', '', '#f3f3f3', '#2d4f9c', '#58a8d8'];

const Taskbar = () => (
  <div className="flex h-2 shrink-0 overflow-hidden border-t border-[#222] bg-linear-to-r from-[#5d6368] via-[#77797c] to-[#4d4a4b] pl-3">
    <i className="h-8 w-8 rounded-full border border-[#dce9f2] bg-[#6f9bbd]" />
    <i className="mt-1 mr-2 ml-3.5 h-1 w-2.5 border-b border-dotted border-[#222]" />
    {taskColors.map((color, i) => (
      <button
        key={i}
        aria-label="任务"
        className={`mr-1 h-8 w-[103px] rounded-t-xs border border-[#3c3c3c] px-3 ${
          i === 8 ? 'bg-linear-to-r from-[#d5d8da] to-[#eeeeee]' : 'bg-linear-to-r from-[#b5b5b5] to-[#858585]'
        }`}
      >
        <i className="mt-0.5 block h-6 w-6 rounded-full" style={{ background: color || 'transparent' }} />
      </button>
    ))}
    <span className="mt-1 mr-9 ml-auto leading-4 text-white">15:43</span>
    <i className="h-8 w-3.5 border border-[#999]" />
  </div>
);

const App = () => (
  <div className="flex h-screen flex-col overflow-hidden bg-[#2e3547] font-['Noto_Sans','Noto_Sans_CJK_SC',sans-serif] text-xs select-none">
    <svg className="absolute h-0 w-0" aria-hidden="true">
      <linearGradient id="paper" x1="0" y1="0" x2="1" y2="1">
        <stop offset="0" stopColor="#fff" />
        <stop offset="1" stopColor="#cfe0f8" />
      </linearGradient>
    </svg>
    <TitleBar />
    <MenuBar />
    <Ribbon />
    <Toolbar />
    <div className="flex min-h-0 flex-1">
      <Properties />
      <Workspace />
    </div>
    <CommandLine />
    <StatusBar />
    <Taskbar />
  </div>
);

export default App;
